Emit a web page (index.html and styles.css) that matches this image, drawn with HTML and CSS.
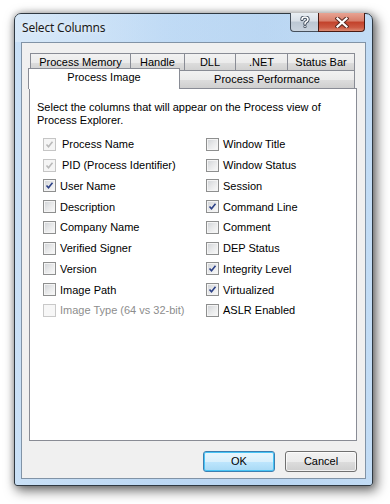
FILE: index.html
```html
<!DOCTYPE html>
<html>
<head>
<meta charset="utf-8">
<link rel="stylesheet" href="styles.css">
</head>
<body>
<div class="screen">
  <div class="window">
    <div class="titlebar">
      <div class="title">Select Columns</div>
      <div class="caption-btns">
        <div class="cap help"><svg width="10" height="12" viewBox="0 0 10 12"><path d="M2 3.5 Q2 1 5 1 Q8 1 8 3.5 Q8 5 6 6 Q5 6.5 5 8" fill="none" stroke="#3d4a5a" stroke-width="3.4" stroke-linecap="round"/><path d="M2 3.5 Q2 1 5 1 Q8 1 8 3.5 Q8 5 6 6 Q5 6.5 5 8" fill="none" stroke="#fff" stroke-width="1.6" stroke-linecap="round"/><circle cx="5" cy="10.6" r="1.6" fill="#3d4a5a"/><circle cx="5" cy="10.6" r="0.8" fill="#fff"/></svg></div>
        <div class="cap close"><svg width="14" height="11" viewBox="0 0 14 11"><path d="M2.5 1.5 L11.5 9.5 M11.5 1.5 L2.5 9.5" stroke="#5a2a22" stroke-width="4.2" stroke-linecap="square"/><path d="M2.5 1.5 L11.5 9.5 M11.5 1.5 L2.5 9.5" stroke="#fff" stroke-width="2.2" stroke-linecap="square"/></svg></div>
      </div>
    </div>
    <div class="client">
      <div class="tabs">
        <div class="tabrow back">
          <div class="tab w1">Process Memory</div>
          <div class="tab w2">Handle</div>
          <div class="tab w3">DLL</div>
          <div class="tab w4">.NET</div>
          <div class="tab w5">Status Bar</div>
        </div>
        <div class="tabrow front">
          <div class="tab sel">Process Image</div>
          <div class="tab perf">Process Performance</div>
        </div>
      </div>
      <div class="panel">
        <p class="intro">Select the columns that will appear on the Process view of Process Explorer.</p>
        <div class="grid">
          <div class="col">
            <label class="opt dis"><span class="cb on"><svg viewBox="0 0 9 9"><path d="M1.5 4.5 L3.5 6.8 L7.5 1.8" fill="none" stroke-width="1.6"/></svg></span><span class="lbl pad">Process Name</span></label>
            <label class="opt dis"><span class="cb on"><svg viewBox="0 0 9 9"><path d="M1.5 4.5 L3.5 6.8 L7.5 1.8" fill="none" stroke-width="1.6"/></svg></span><span class="lbl pad">PID (Process Identifier)</span></label>
            <label class="opt"><span class="cb on"><svg viewBox="0 0 9 9"><path d="M1.5 4.5 L3.5 6.8 L7.5 1.8" fill="none" stroke-width="1.6"/></svg></span><span class="lbl">User Name</span></label>
            <label class="opt"><span class="cb"></span><span class="lbl">Description</span></label>
            <label class="opt"><span class="cb"></span><span class="lbl">Company Name</span></label>
            <label class="opt"><span class="cb"></span><span class="lbl">Verified Signer</span></label>
            <label class="opt"><span class="cb"></span><span class="lbl">Version</span></label>
            <label class="opt"><span class="cb"></span><span class="lbl">Image Path</span></label>
            <label class="opt gray"><span class="cb"></span><span class="lbl">Image Type (64 vs 32-bit)</span></label>
          </div>
          <div class="col">
            <label class="opt"><span class="cb"></span><span class="lbl">Window Title</span></label>
            <label class="opt"><span class="cb"></span><span class="lbl">Window Status</span></label>
            <label class="opt"><span class="cb"></span><span class="lbl">Session</span></label>
            <label class="opt"><span class="cb on"><svg viewBox="0 0 9 9"><path d="M1.5 4.5 L3.5 6.8 L7.5 1.8" fill="none" stroke-width="1.6"/></svg></span><span class="lbl">Command Line</span></label>
            <label class="opt"><span class="cb"></span><span class="lbl">Comment</span></label>
            <label class="opt"><span class="cb"></span><span class="lbl">DEP Status</span></label>
            <label class="opt"><span class="cb on"><svg viewBox="0 0 9 9"><path d="M1.5 4.5 L3.5 6.8 L7.5 1.8" fill="none" stroke-width="1.6"/></svg></span><span class="lbl">Integrity Level</span></label>
            <label class="opt"><span class="cb on"><svg viewBox="0 0 9 9"><path d="M1.5 4.5 L3.5 6.8 L7.5 1.8" fill="none" stroke-width="1.6"/></svg></span><span class="lbl">Virtualized</span></label>
            <label class="opt"><span class="cb"></span><span class="lbl">ASLR Enabled</span></label>
          </div>
        </div>
      </div>
      <div class="buttons">
        <div class="btn default">OK</div>
        <div class="btn">Cancel</div>
      </div>
    </div>
  </div>
</div>
</body>
</html>
```
FILE: styles.css
```css
* { box-sizing: border-box; }
html, body { margin: 0; padding: 0; background: #fff; }
body { font-family: "Liberation Sans", Arial, sans-serif; font-size: 11px; color: #000; }

.screen { width: 390px; height: 504px; padding: 13px 0 0 14px; overflow: hidden; }

.window {
  width: 359px; height: 473px;
  border: 1px solid #2f3942;
  border-radius: 7px 7px 3px 3px;
  background: linear-gradient(90deg, #c9e0f6 0%, #bcd8f4 40%, #b8d5f2 70%, #c2dcf5 100%);
  box-shadow: 3px 4px 12px 1px rgba(0,0,0,0.55), 0 0 6px rgba(0,0,0,0.25);
  display: flex; flex-direction: column;
}

.titlebar {
  height: 28px; display: flex; align-items: flex-start;
  padding-left: 7px;
  background: linear-gradient(90deg, rgba(225,238,250,0.6) 0%, rgba(200,224,247,0.3) 45%, rgba(190,216,243,0) 100%);
  border-radius: 6px 6px 0 0;
}
.title {
  font-family: "Noto Sans", "Open Sans", sans-serif; font-size: 12px; color: #1b1b1b;
  line-height: 16px; margin-top: 6px; letter-spacing: -0.2px;
  text-shadow: 0 0 6px rgba(255,255,255,0.9);
}
.caption-btns { margin-left: auto; margin-right: 7px; margin-top: -1px; display: flex; }
.cap { height: 19px; display: flex; align-items: center; justify-content: center; border: 1px solid #46505c; border-top: none; }
.help {
  width: 28px; border-radius: 0 0 0 4px; border-right: none;
  background: linear-gradient(180deg, #e9eef3 0%, #d8dfe7 45%, #bcc7d3 50%, #c9d3de 100%);
}
.close {
  width: 47px; border-radius: 0 0 4px 0; border-color: #4a1a12;
  background: linear-gradient(180deg, #e8a393 0%, #d77e6a 45%, #c2412a 50%, #cc5a43 80%, #dc8a72 100%);
}

.client {
  flex: 1; margin: 0 6px 6px 6px;
  border: 1px solid #8193a6;
  background: #f0f0f0;
  padding: 10px 8px 0 7px;
  display: flex; flex-direction: column;
}

.tabs { display: flex; flex-direction: column; }
.tabrow { display: flex; }
.tabrow.back { height: 17px; padding-left: 1px; }
.tabrow.front { height: 20px; margin-top: -2px; align-items: flex-end; }
.tab {
  border: 1px solid #898c95; border-bottom: none;
  background: linear-gradient(180deg, #f2f2f2 0%, #ebebeb 50%, #dddddd 51%, #cfcfcf 100%);
  text-align: center; line-height: 16px; height: 18px;
  white-space: nowrap;
}
.tab + .tab { margin-left: -1px; }
.w1 { width: 101px; }
.w2 { width: 55px; }
.w3 { width: 52px; }
.w4 { width: 53px; }
.w5 { width: 68px; }
.tab.sel { width: 152px; height: 21px; margin-left: -1px; margin-bottom: -1px; background: #fff; line-height: 17px; position: relative; z-index: 1; }
.tab.perf { width: 176px; margin-left: -1px; }

.panel {
  height: 353px; width: 328px;
  border: 1px solid #898c95;
  background: #fff;
  padding: 12px 7px 0 7px;
}
.intro { margin: 0; line-height: 13px; width: 300px; }

.grid { display: grid; grid-template-columns: 163px 1fr; margin-top: 7px; padding-left: 6px; }
.col { display: flex; flex-direction: column; }
.opt { height: 20.75px; display: flex; align-items: center; }
.cb {
  width: 13px; height: 13px; flex: none;
  border: 1px solid #8e8f8f;
  background: linear-gradient(135deg, #cfd2d6 0%, #e8e9ea 50%, #fafafa 100%);
  box-shadow: inset 0 0 0 1px #f4f4f4;
  display: flex; align-items: center; justify-content: center;
}
.cb svg { width: 9px; height: 9px; }
.cb svg path { stroke: #2c4187; }
.lbl { margin-left: 4px; }
.lbl.pad { margin-left: 6px; }
.dis .cb { border-color: #c5c5c5; background: #f5f5f5; box-shadow: none; }
.dis .cb svg path { stroke: #b9b9b9; }
.gray .cb { border-color: #c9c9c9; background: #f7f7f7; box-shadow: none; }
.gray .lbl { color: #8d8d8d; }

.buttons { display: flex; justify-content: flex-end; gap: 10px; margin-top: 10px; }
.btn {
  width: 72px; height: 21px; line-height: 19px; text-align: center;
  border: 1px solid #707070; border-radius: 3px;
  background: linear-gradient(180deg, #f2f2f2 0%, #ebebeb 50%, #dddddd 51%, #cfcfcf 100%);
  box-shadow: inset 0 0 0 1px rgba(255,255,255,0.7);
  font-size: 11px;
}
.btn.default {
  border-color: #3c7fb1;
  background: linear-gradient(180deg, #eaf6fd 0%, #d9f0fc 50%, #bee6fd 51%, #a7d9f5 100%);
  box-shadow: inset 0 0 0 1px #48c4f5;
}
```
